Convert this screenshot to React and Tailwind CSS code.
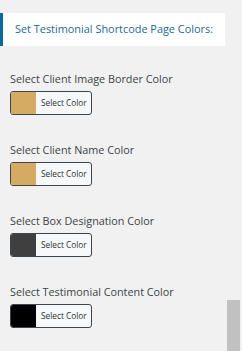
import React from "react";

const rows = [
  { label: "Select Client Image Border Color", color: "#d5aa62" },
  { label: "Select Client Name Color", color: "#d5aa62" },
  { label: "Select Box Designation Color", color: "#3f3f3f" },
  { label: "Select Testimonial Content Color", color: "#000000" },
];

export default function App() {
  return (
    <div className="relative w-[242px] h-[351px] overflow-hidden bg-[#f1f1f1] font-['Open_Sans',sans-serif]">
      <div className="pt-[13px]">
        <div className="w-[225px] h-[33px] bg-white border-l-[3px] border-[#0a6a9e] flex items-center pl-[12px]">
          <span className="text-[10.9px] text-[#1f6a90] leading-none whitespace-nowrap">
            Set Testimonial Shortcode Page Colors:
          </span>
        </div>
      </div>
      <div className="pl-[10px] pt-[24px] flex flex-col gap-[26px]">
        {rows.map((r) => (
          <div key={r.label} className="flex flex-col gap-[3px]">
            <div className="text-[10.8px] leading-[18px] text-[#3c434a] whitespace-nowrap">{r.label}</div>
            <div className="flex w-[82px] h-[24px] rounded-[3px] border border-[#3a4650] bg-[#f7f8f9] overflow-hidden">
              <div className="w-[25px] h-full" style={{ backgroundColor: r.color }} />
              <div className="flex-1 flex items-center pl-[5px] text-[8.3px] text-[#2c3338] whitespace-nowrap">
                Select Color
              </div>
            </div>
          </div>
        ))}
      </div>
      <div className="absolute left-[227px] top-[300px] w-[13px] h-[51px] bg-[#c1c1c1]" />
    </div>
  );
}
